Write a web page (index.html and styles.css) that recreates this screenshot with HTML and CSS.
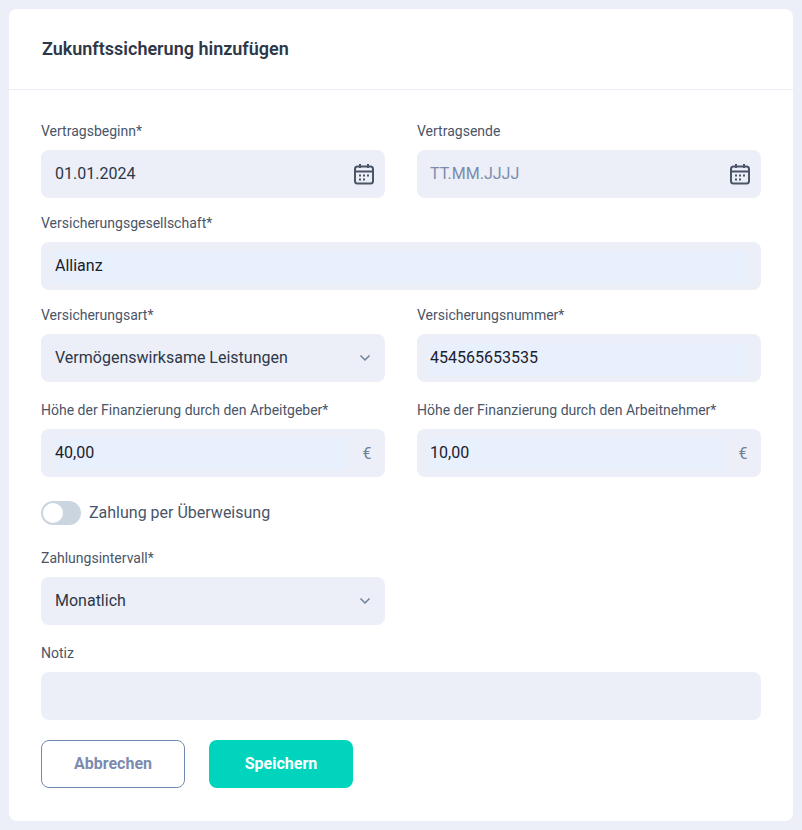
FILE: index.html
```html
<!DOCTYPE html>
<html lang="de">
<head>
  <meta charset="UTF-8">
  <meta name="viewport" content="width=device-width, initial-scale=1.0">
  <title>Zukunftssicherung hinzufügen</title>
  <link rel="stylesheet" href="styles.css">
</head>
<body>
  <svg class="icon-defs" width="0" height="0" aria-hidden="true">
    <symbol id="calendar" viewBox="0 0 22 22">
      <rect x="2" y="3.5" width="18" height="17" rx="2.5" fill="none" stroke="currentColor" stroke-width="2"/>
      <path d="M2 8.5h18M7 1v4M15 1v4" fill="none" stroke="currentColor" stroke-width="2"/>
      <path d="M6 11.5h2v2H6zM10 11.5h2v2h-2zM14 11.5h2v2h-2zM6 15.5h2v2H6zM10 15.5h2v2h-2z" fill="currentColor"/>
    </symbol>
    <symbol id="chevron" viewBox="0 0 12 8">
      <path d="M1.5 1.5 6 6l4.5-4.5" fill="none" stroke="currentColor" stroke-width="1.5"/>
    </symbol>
  </svg>

  <div class="card">
    <div class="card-header">
      <h1>Zukunftssicherung hinzufügen</h1>
    </div>

    <form class="card-body">
      <div class="row row-tight">
        <div class="field">
          <label>Vertragsbeginn*</label>
          <div class="control">
            <input type="text" value="01.01.2024">
            <svg class="icon-calendar"><use href="#calendar"/></svg>
          </div>
        </div>
        <div class="field">
          <label>Vertragsende</label>
          <div class="control">
            <input type="text" placeholder="TT.MM.JJJJ">
            <svg class="icon-calendar"><use href="#calendar"/></svg>
          </div>
        </div>
      </div>

      <div class="row row-tight">
        <div class="field field-wide">
          <label>Versicherungsgesellschaft*</label>
          <div class="control control-filled">
            <input type="text" value="Allianz">
          </div>
        </div>
      </div>

      <div class="row">
        <div class="field">
          <label>Versicherungsart*</label>
          <div class="control">
            <input type="text" value="Vermögenswirksame Leistungen" readonly>
            <svg class="icon-chevron"><use href="#chevron"/></svg>
          </div>
        </div>
        <div class="field">
          <label>Versicherungsnummer*</label>
          <div class="control control-filled">
            <input type="text" value="454565653535">
          </div>
        </div>
      </div>

      <div class="row">
        <div class="field">
          <label>Höhe der Finanzierung durch den Arbeitgeber*</label>
          <div class="control control-filled control-money">
            <input type="text" value="40,00">
            <span class="unit">€</span>
          </div>
        </div>
        <div class="field">
          <label>Höhe der Finanzierung durch den Arbeitnehmer*</label>
          <div class="control control-filled control-money">
            <input type="text" value="10,00">
            <span class="unit">€</span>
          </div>
        </div>
      </div>

      <div class="toggle-row">
        <span class="toggle"><span class="toggle-knob"></span></span>
        <span class="toggle-label">Zahlung per Überweisung</span>
      </div>

      <div class="row">
        <div class="field">
          <label>Zahlungsintervall*</label>
          <div class="control">
            <input type="text" value="Monatlich" readonly>
            <svg class="icon-chevron"><use href="#chevron"/></svg>
          </div>
        </div>
      </div>

      <div class="row">
        <div class="field field-wide">
          <label>Notiz</label>
          <div class="control">
            <input type="text">
          </div>
        </div>
      </div>

      <div class="actions">
        <button type="button" class="btn btn-outline">Abbrechen</button>
        <button type="button" class="btn btn-primary">Speichern</button>
      </div>
    </form>
  </div>
</body>
</html>
```

FILE: styles.css
```css
* {
  box-sizing: border-box;
}
html, body {
  height: 100%;
}
body {
  margin: 0;
  padding: 9px;
  background: #eceff7;
  font-family: Roboto, "Liberation Sans", sans-serif;
  overflow: hidden;
}
.icon-defs {
  position: absolute;
}
.card {
  width: 784px;
  height: 812px;
  background: #fff;
  border-radius: 8px;
}
.card-header {
  height: 81px;
  padding: 0 33px 2px;
  display: flex;
  align-items: center;
  border-bottom: 1px solid #eceff7;
}
h1 {
  margin: 0;
  font-size: 18px;
  font-weight: 600;
  color: #2d3748;
}
.card-body {
  padding: 31px 32px 0;
}
.row {
  display: grid;
  grid-template-columns: 344px 344px;
  column-gap: 32px;
  margin-bottom: 18px;
}
.row-tight {
  margin-bottom: 15px;
}
.field-wide {
  grid-column: 1 / 3;
}
label {
  display: block;
  height: 20px;
  margin-bottom: 9px;
  font-size: 14px;
  line-height: 20px;
  color: #4a5568;
}
.control {
  display: flex;
  align-items: center;
  height: 48px;
  padding: 0 13px 0 14px;
  background: #eceff7;
  border-radius: 8px;
}
.field + .field .control {
  padding-left: 13px;
}
.control input {
  flex: 1;
  min-width: 0;
  height: 32px;
  margin-top: 1px;
  padding: 0 0 2px;
  border: 0;
  outline: none;
  background: transparent;
  font: 400 16px Roboto, "Liberation Sans", sans-serif;
  color: #2d3748;
}
.control input::placeholder {
  color: #7b8bae;
  opacity: 1;
}
.control-filled input {
  background: #e8f0fe;
  color: #1a202c;
}
.control-money {
  padding-right: 0;
}
.unit {
  width: 37px;
  padding-left: 1px;
  text-align: center;
  font-size: 16px;
  color: #718096;
}
.icon-calendar {
  width: 22px;
  height: 22px;
  margin-right: -3px;
  color: #4a5568;
}
.icon-chevron {
  width: 12px;
  height: 8px;
  margin-right: 1px;
  color: #718096;
}
.toggle-row {
  display: flex;
  align-items: center;
  gap: 8px;
  height: 24px;
  margin: 24px 0 23px;
}
.toggle {
  display: block;
  width: 40px;
  height: 24px;
  padding: 2px;
  background: #cbd5e0;
  border-radius: 12px;
}
.toggle-knob {
  display: block;
  width: 20px;
  height: 20px;
  background: #fff;
  border-radius: 50%;
}
.toggle-label {
  margin-bottom: 2px;
  font-size: 16px;
  color: #4a5568;
}
.actions {
  display: flex;
  gap: 24px;
  margin-top: 20px;
}
.btn {
  width: 144px;
  height: 48px;
  padding: 0 0 2px;
  border-radius: 8px;
  font: 700 16px Roboto, "Liberation Sans", sans-serif;
}
.btn-outline {
  background: #fff;
  border: 1px solid #718bb0;
  color: #7b8bae;
}
.btn-primary {
  background: #00d4bc;
  border: 0;
  color: #fff;
}
```
